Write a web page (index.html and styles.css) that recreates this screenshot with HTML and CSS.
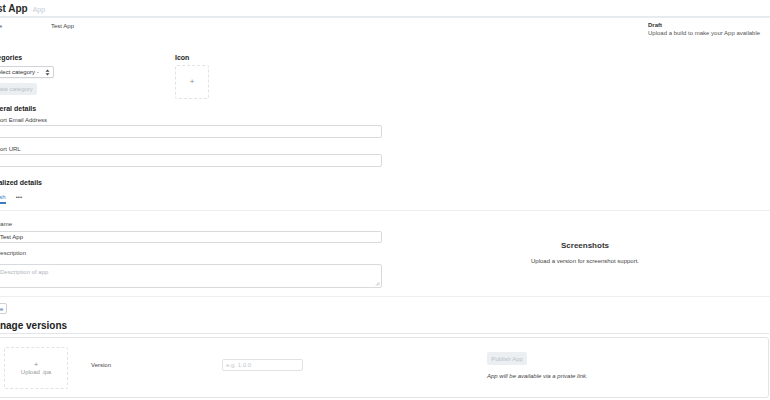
FILE: index.html
```html
<!DOCTYPE html>
<html>
<head>
<meta charset="utf-8">
<link rel="stylesheet" href="styles.css">
</head>
<body>
<div class="page">
  <header class="header">
    <h1 class="title">Test App</h1>
    <span class="title-tag">App</span>
  </header>

  <div class="info-row">
    <div class="info-left">
      <span class="info-label">Name</span>
      <span class="info-value">Test App</span>
    </div>
    <div class="status">
      <div class="status-title">Draft</div>
      <div class="status-text">Upload a build to make your App available</div>
    </div>
  </div>

  <div class="cat-row">
    <div class="cat-col">
      <h3 class="sec-h">Categories</h3>
      <div class="select">
        <span>- Select category -</span>
        <svg class="sel-arrows" width="5" height="7" viewBox="0 0 5 7"><path d="M2.5 0.5 L4.5 2.8 H0.5 Z M2.5 6.5 L4.5 4.2 H0.5 Z" fill="#444"/></svg>
      </div>
      <button class="btn-disabled cat-btn">Create category</button>
    </div>
    <div class="icon-col">
      <h3 class="sec-h">Icon</h3>
      <div class="icon-box">+</div>
    </div>
  </div>

  <h3 class="sec-h gen-h">General details</h3>
  <div class="form-narrow">
    <label class="lbl lbl-first">Support Email Address</label>
    <div class="input"></div>
    <label class="lbl lbl-url">Support URL</label>
    <div class="input"></div>
  </div>

  <h3 class="sec-h loc-h">Localized details</h3>
  <div class="tabs">
    <span class="tab active">English</span>
    <span class="tab more">•••</span>
  </div>

  <div class="loc-section">
    <div class="loc-form">
      <label class="lbl lbl-name">Name</label>
      <div class="input input-name">Test App</div>
      <label class="lbl lbl-desc">Description</label>
      <div class="textarea">Description of app
        <svg class="grip" width="5" height="5" viewBox="0 0 5 5"><path d="M1 4.5 L4.5 1 M3 4.5 L4.5 3" stroke="#999" stroke-width="0.6"/></svg>
      </div>
    </div>
    <div class="shots">
      <div class="shots-h">Screenshots</div>
      <div class="shots-t">Upload a version for screenshot support.</div>
    </div>
  </div>

  <button class="btn-save">Save</button>

  <h2 class="versions-h">Manage versions</h2>

  <div class="card">
    <div class="upload-box">
      <span class="plus">+</span>
      <span class="upload-t">Upload .ipa</span>
    </div>
    <div class="ver-label">Version</div>
    <div class="ver-input">e.g. 1.0.0</div>
    <div class="publish">
      <button class="btn-disabled pub-btn">Publish App</button>
      <div class="pub-note">App will be available via a private link.</div>
    </div>
  </div>
</div>
</body>
</html>
```

FILE: styles.css
```css
html, body {
  margin: 0;
  padding: 0;
  background: #fff;
  overflow: hidden;
}
body {
  font-family: "Liberation Sans", Arial, sans-serif;
  font-size: 6px;
  line-height: 8px;
  color: #333;
}
.page {
  margin-left: -14px;
  width: 784px;
}
.header {
  display: flex;
  align-items: baseline;
  padding: 3px 0 1px;
  border-bottom: 2px solid #e6ebf0;
}
.title {
  margin: 0;
  font-size: 10px;
  line-height: 12px;
  font-weight: bold;
  color: #2a2a2a;
}
.title-tag {
  margin-left: 5px;
  font-size: 7px;
  color: #c3ccd5;
}
.info-row {
  display: flex;
  justify-content: space-between;
  height: 35px;
}
.info-left {
  display: flex;
  padding-top: 4px;
}
.info-label {
  width: 65px;
  color: #444;
}
.info-value {
  color: #444;
}
.status {
  width: 122px;
  padding-top: 3px;
}
.status-title {
  font-weight: bold;
  color: #333;
}
.status-text {
  color: #555;
}
.sec-h {
  margin: 0;
  font-size: 7px;
  line-height: 9px;
  font-weight: bold;
  color: #222;
}
.cat-row {
  display: flex;
}
.cat-col {
  width: 189px;
}
.select {
  margin-top: 4px;
  width: 60px;
  height: 10px;
  border: 1px solid #d0d4d8;
  border-radius: 2px;
  display: flex;
  align-items: center;
  justify-content: space-between;
  padding: 0 3px;
  color: #333;
  box-shadow: 0 1px 1px rgba(0,0,0,0.05);
}
.sel-arrows {
  display: block;
}
.btn-disabled {
  border: none;
  border-radius: 2px;
  background: #eceff2;
  color: #b9c0c7;
  font-family: inherit;
  font-size: 6px;
  line-height: 8px;
  padding: 0;
}
.cat-btn {
  display: block;
  margin-top: 5px;
  width: 51px;
  height: 12px;
}
.icon-box {
  margin-top: 3px;
  width: 32px;
  height: 32px;
  border: 1px dashed #e3e3e3;
  border-radius: 2px;
  display: flex;
  align-items: center;
  justify-content: center;
  color: #888;
  font-size: 8px;
}
.gen-h {
  margin-top: 5px;
}
.form-narrow {
  width: 396px;
}
.lbl {
  display: block;
  margin-top: 6px;
  color: #444;
}
.lbl-first {
  margin-top: 3px;
}
.lbl-url {
  margin-top: 7px;
}
.input {
  margin-top: 1px;
  height: 11px;
  border: 1px solid #d8dbde;
  border-radius: 2px;
  padding: 0 3px;
  line-height: 11px;
  color: #333;
}
.loc-h {
  margin-top: 11px;
}
.tabs {
  display: flex;
  margin-top: 6px;
  gap: 10px;
}
.tab {
  padding-bottom: 1px;
  color: #3b7bbf;
}
.tab.active {
  border-bottom: 2px solid #3b7bbf;
}
.tab.more {
  color: #555;
  font-size: 6px;
}
.loc-section {
  margin-top: 6px;
  border-top: 1px solid #eceeef;
  border-bottom: 1px solid #eceeef;
  display: flex;
  padding-bottom: 8px;
}
.loc-form {
  width: 386px;
  padding-left: 10px;
}
.lbl-name {
  margin-top: 9px;
}
.input-name {
  margin-top: 3px;
  height: 10px;
  line-height: 10px;
}
.lbl-desc {
  margin-top: 6px;
}
.textarea {
  position: relative;
  margin-top: 7px;
  border: 1px solid #d8dbde;
  border-radius: 2px;
  padding: 3px 3px 0;
  color: #b0b6bc;
  box-sizing: border-box;
  height: 24px;
}
.grip {
  position: absolute;
  right: 1px;
  bottom: 1px;
}
.shots {
  flex: 1;
  display: flex;
  flex-direction: column;
  align-items: center;
  justify-content: center;
  padding-top: 6px;
  margin-left: 18px;
}
.shots-h {
  font-size: 8px;
  line-height: 10px;
  font-weight: bold;
  color: #333;
}
.shots-t {
  margin-top: 6px;
  color: #444;
}
.btn-save {
  display: block;
  margin-top: 6px;
  height: 11px;
  width: 21px;
  padding: 0;
  background: #fff;
  border: 1px solid #ccd2d8;
  border-radius: 2px;
  font-family: inherit;
  font-size: 6px;
  line-height: 8px;
  color: #3b6ea5;
}
.versions-h {
  margin: 6px 0 0;
  font-size: 10px;
  line-height: 12px;
  font-weight: bold;
  color: #222;
  border-bottom: 1px solid #e3e6e8;
  width: 783px;
  padding-bottom: 1px;
}
.card {
  margin-top: 3px;
  width: 783px;
  box-sizing: border-box;
  border: 1px solid #e2e5e8;
  border-radius: 3px;
  padding: 9px 0 8px 17px;
  display: flex;
  align-items: flex-start;
}
.upload-box {
  width: 62px;
  height: 40px;
  border: 1px dashed #e3e3e3;
  border-radius: 2px;
  display: flex;
  flex-direction: column;
  align-items: center;
  justify-content: center;
  color: #999;
}
.plus {
  font-size: 8px;
  line-height: 7px;
}
.upload-t {
  line-height: 8px;
}
.ver-label {
  margin-left: 23px;
  margin-top: 14px;
  width: 131px;
  color: #444;
}
.ver-input {
  margin-top: 12px;
  width: 73px;
  height: 10px;
  border: 1px solid #e0e3e6;
  border-radius: 2px;
  padding: 0 3px;
  line-height: 10px;
  color: #c2c7cc;
}
.publish {
  margin-left: 184px;
  margin-top: 5px;
}
.pub-btn {
  display: block;
  width: 40px;
  height: 13px;
}
.pub-note {
  margin-top: 7px;
  font-style: italic;
  color: #444;
}
```
